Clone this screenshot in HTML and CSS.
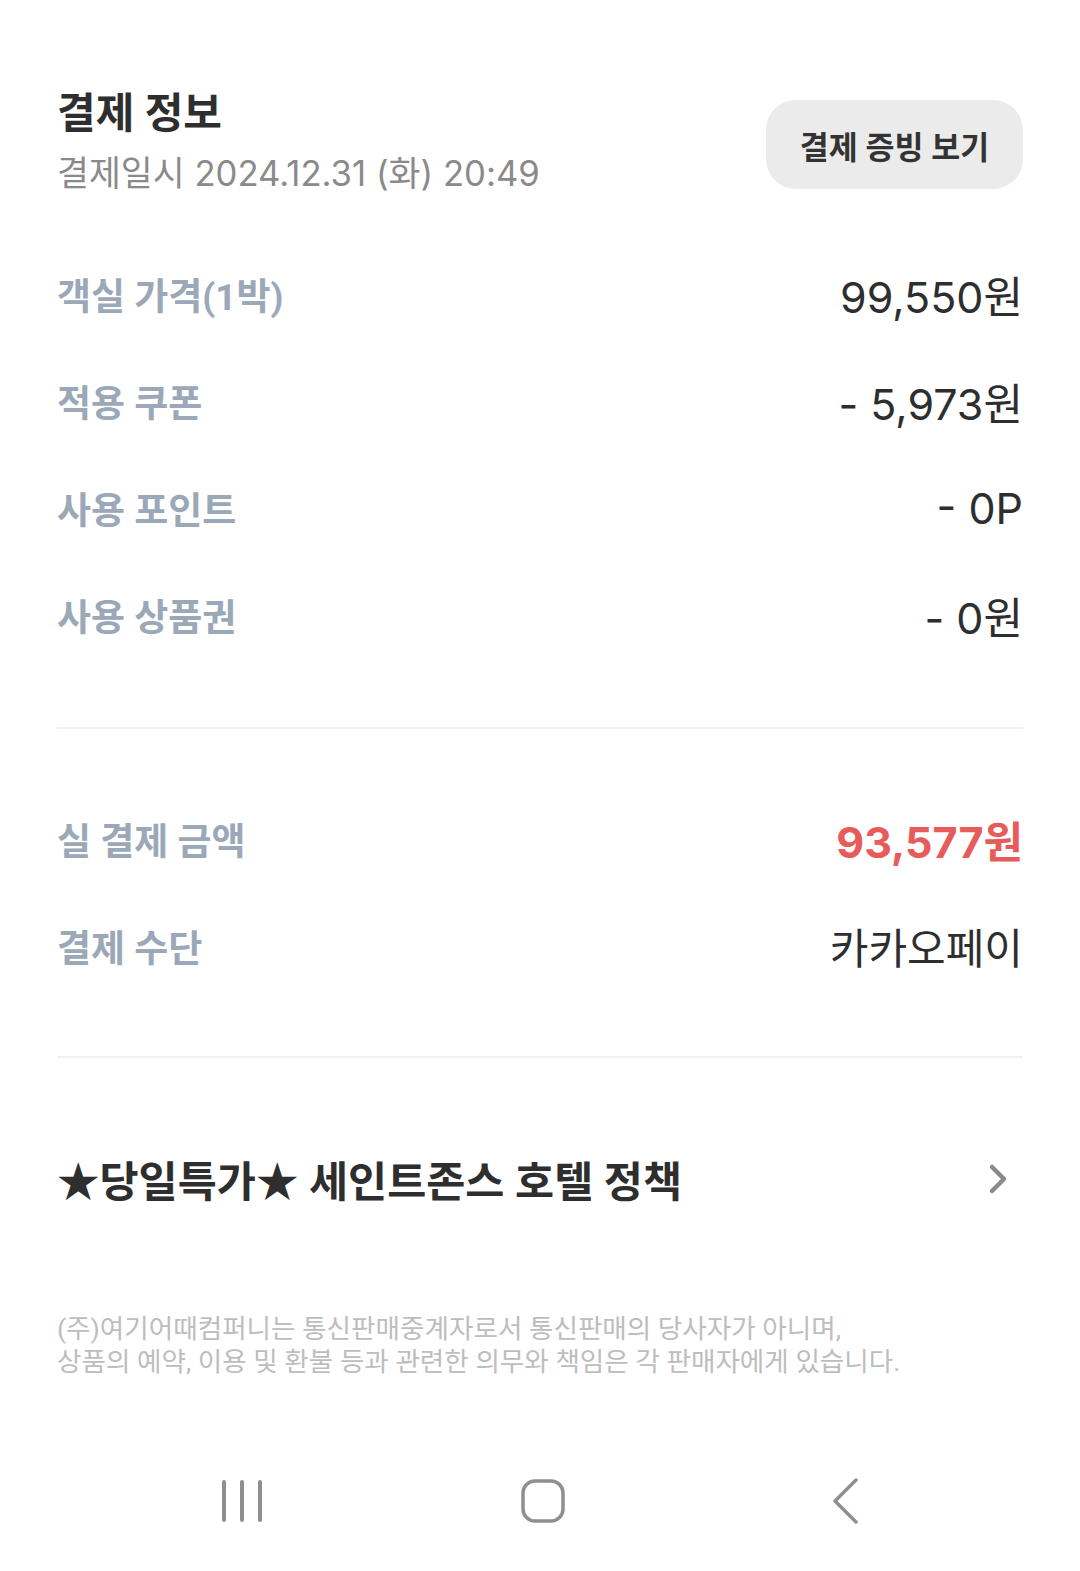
FILE: index.html
```html
<!DOCTYPE html>
<html lang="ko">
<head>
    <meta charset="utf-8">
    <title>결제 정보</title>
    <link rel="stylesheet" href="styles.css">
</head>
<body>
    <div class="page">
        <div class="pay-head">
            <div class="pay-head-text">
                <h1>결제 정보</h1>
                <p class="pay-date">결제일시 2024.12.31 (화) 20:49</p>
            </div>
            <button class="receipt-button">결제 증빙 보기</button>
        </div>

        <ul class="pay-list">
            <li><span class="label">객실 가격(1박)</span><span class="value">99,550원</span></li>
            <li><span class="label">적용 쿠폰</span><span class="value">- 5,973원</span></li>
            <li><span class="label">사용 포인트</span><span class="value">- 0P</span></li>
            <li><span class="label">사용 상품권</span><span class="value">- 0원</span></li>
        </ul>

        <hr class="divider">

        <ul class="pay-list total">
            <li><span class="label">실 결제 금액</span><span class="value red">93,577원</span></li>
            <li><span class="label">결제 수단</span><span class="value pay-method">카카오페이</span></li>
        </ul>

        <hr class="divider">

        <a class="policy" href="#">
            <span>★당일특가★ 세인트존스 호텔 정책</span>
            <svg width="24" height="40" viewBox="0 0 24 40">
                <path d="M5 8 L17 20 L5 32" fill="none" stroke="#8a8a8a" stroke-width="4.5" stroke-linecap="round" stroke-linejoin="round"/>
            </svg>
        </a>

        <p class="notice">(주)여기어때컴퍼니는 통신판매중계자로서 통신판매의 당사자가 아니며,<br>상품의 예약, 이용 및 환불 등과 관련한 의무와 책임은 각 판매자에게 있습니다.</p>
    </div>

    <nav class="nav-bar">
        <svg class="nav-recent" width="44" height="44" viewBox="0 0 44 44">
            <path d="M4 3 V41 M22 3 V41 M40 3 V41" stroke="#8f8f8f" stroke-width="4" stroke-linecap="round"/>
        </svg>
        <svg class="nav-home" width="46" height="46" viewBox="0 0 46 46">
            <rect x="3" y="3" width="40" height="40" rx="12" fill="none" stroke="#8f8f8f" stroke-width="3.5"/>
        </svg>
        <svg class="nav-back" width="30" height="46" viewBox="0 0 30 46">
            <path d="M25 2 L4 23 L25 44" fill="none" stroke="#8f8f8f" stroke-width="3.5" stroke-linecap="round" stroke-linejoin="round"/>
        </svg>
    </nav>
</body>
</html>
```

FILE: styles.css
```css
body {
    margin: 0;
    background-color: #fff;
    font-family: Roboto, 'Noto Sans CJK KR', sans-serif;
    color: #333;
}
.page {
    padding: 84px 57px 0 57px;
    height: 1435px;
    box-sizing: border-box;
}
.pay-head {
    display: flex;
    justify-content: space-between;
    align-items: flex-start;
}
.pay-head h1 {
    margin: 0;
    font-size: 42px;
    line-height: 60px;
    font-weight: 700;
    color: #2e2e2e;
}
.pay-date {
    margin: 0;
    font-family: Inter, 'Noto Sans CJK KR', sans-serif;
    font-size: 34.7px;
    line-height: 58px;
    color: #8a8a8a;
}
.receipt-button {
    margin-top: 16px;
    width: 257px;
    height: 89px;
    border: none;
    border-radius: 30px;
    background-color: #ebebeb;
    font-family: inherit;
    font-size: 31.5px;
    font-weight: 700;
    color: #333;
}
.pay-list {
    list-style: none;
    margin: 0;
    padding: 0;
}
.pay-list li {
    display: flex;
    justify-content: space-between;
    align-items: center;
    height: 107px;
}
.pay-list:first-of-type {
    margin-top: 38px;
}
.label {
    font-size: 37px;
    font-weight: 700;
    color: #9ba8b7;
}
.value {
    font-family: Inter, 'Noto Sans CJK KR', sans-serif;
    font-size: 43px;
    color: #2e2e2e;
}
.value.red {
    color: #e85b5b;
    font-weight: 700;
}
.value.pay-method {
    font-size: 42px;
}
.divider {
    margin: 0;
    border: none;
    border-top: 2px solid #f1f1f1;
}
.pay-list:first-of-type + .divider {
    margin-top: 59px;
}
.total {
    margin-top: 56px;
}
.total + .divider {
    margin-top: 57px;
}
.policy {
    display: flex;
    justify-content: space-between;
    align-items: center;
    margin-top: 90px;
    padding-right: 12px;
    text-decoration: none;
    font-size: 42.5px;
    font-weight: 700;
    color: #2e2e2e;
}
.notice {
    margin: 103px 0 0;
    font-size: 26.6px;
    line-height: 33px;
    color: #bdbdbd;
}
.nav-bar {
    display: flex;
    align-items: center;
    padding-left: 220px;
    height: 132px;
}
.nav-home {
    margin-left: 256px;
}
.nav-back {
    margin-left: 265px;
}
```
